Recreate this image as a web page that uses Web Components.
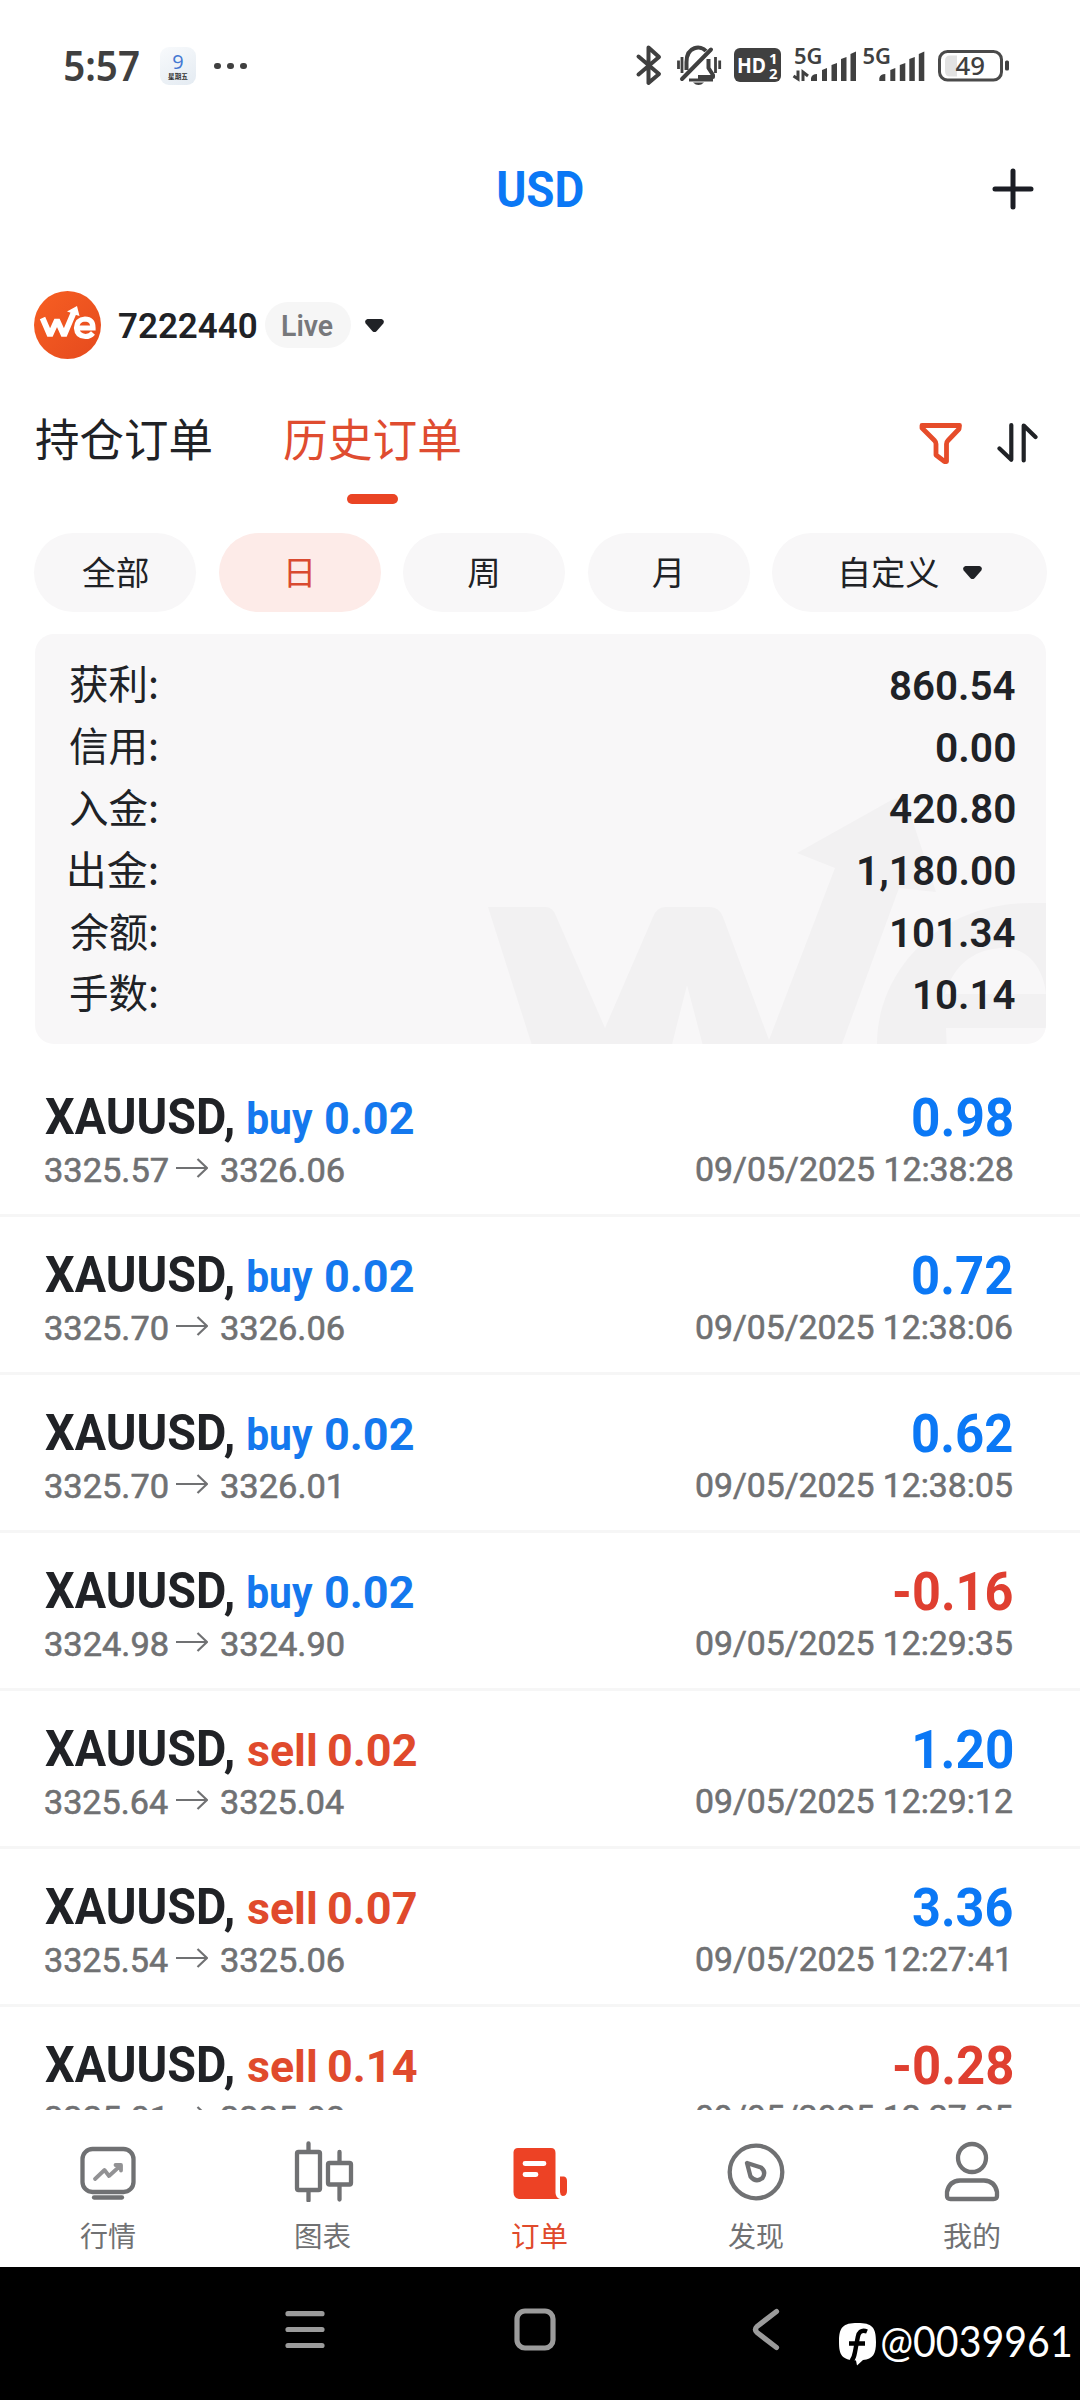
<!DOCTYPE html>
<html lang="zh-CN">
<head>
<meta charset="utf-8">
<title>USD</title>
<style>
html,body{margin:0;padding:0;background:#fff}
body{width:1080px;height:2400px;overflow:hidden;font-family:Roboto,"Noto Sans CJK SC",sans-serif;color:#202226}
</style>
</head>
<body>
<orders-app></orders-app>
<script>
const define=(name,html,setup)=>customElements.define(name,class extends HTMLElement{
  connectedCallback(){
    if(this.shadowRoot)return;
    const root=this.attachShadow({mode:'open'});
    root.innerHTML=typeof html==='function'?html(this):html;
    if(setup)setup(this,root);
  }
});

define('orders-app',`<style>
:host{display:flex;flex-direction:column;width:1080px;height:2400px;position:relative;overflow:hidden}
orders-list{flex:1;min-height:0}
</style>
<status-bar></status-bar><title-bar></title-bar><account-row></account-row>
<order-tabs></order-tabs><period-chips></period-chips><summary-card></summary-card>
<orders-list></orders-list><tab-bar></tab-bar><system-nav></system-nav>`);

define('status-bar',`<style>
:host{display:flex;height:132px;box-sizing:border-box;padding:0 71px 0 65px;justify-content:space-between;align-items:center;color:#404040}
.l{display:flex;align-items:center}
.time{font:600 42px/50px "Noto Sans";margin-top:-3px}
.cal{margin-left:21px;width:36px;height:38px;border-radius:9px;background:linear-gradient(150deg,#f8fafc,#e4ebf2);display:flex;flex-direction:column;align-items:center}
.cal b{font:500 20px/20px "Open Sans";color:#4478d2;margin-top:5px}
.cal i{font:normal 700 6.6px/8px "Noto Sans CJK SC";color:#333;margin-top:0}
.dots{margin-left:18px;display:flex;gap:6.6px}.dots i{width:6.6px;height:6.6px;border-radius:50%;background:#404040}
svg{display:block}
text{font-family:"Noto Sans","Open Sans",sans-serif}
</style>
<div class="l"><fit-text class="time" w="74">5:57</fit-text>
<div class="cal"><b>9</b><i>星期五</i></div><div class="dots"><i></i><i></i><i></i></div></div>
<svg width="374" height="50" viewBox="635 41 374 50" fill="#404040">
<path d="M638.500 56.500L659 74L648.500 83V47.500L659 57L638.500 74.500" fill="none" stroke="#404040" stroke-width="4" stroke-linejoin="round" stroke-linecap="round"/>
<g fill="none" stroke="#404040" stroke-width="4">
<path d="M686.500 70V62C686.500 46 701 45 706 51"/><path d="M682 79L711 49.500" stroke-linecap="round"/>
<path d="M708.500 59V68L713 75V77H698" stroke-linejoin="round"/><path d="M689 80H713" stroke-width="3"/><path d="M678.500 60.500V69M682 57V73M715.500 57V73M719.700 60.500V69" stroke-width="2.800"/></g>
<path d="M693 82.500H704Q698.500 87.500 693 82.500Z"/>
<rect x="734" y="48" width="47" height="34" rx="6"/>
<g fill="#fff"><text x="737" y="72.500" font-size="21" font-weight="700" textLength="29" lengthAdjust="spacingAndGlyphs">HD</text>
<text x="769" y="63.500" font-size="15" font-weight="700">1</text><text x="769" y="79" font-size="15" font-weight="700">2</text></g>
<text x="794" y="63.500" font-size="21" font-weight="600" textLength="28.500" lengthAdjust="spacingAndGlyphs">5G</text>
<text x="862.500" y="63.500" font-size="21" font-weight="600" textLength="28.500" lengthAdjust="spacingAndGlyphs">5G</text>
<path d="M793.500 76L798 79V70.500M803 81V72L808 76" fill="none" stroke="#404040" stroke-width="3"/>
<g id="bars"><path d="M811 81V78Q812 74 817 74V81Z"/><path d="M822 81V70L827 68V81Z"/><path d="M831.500 81V65L837 63V81Z"/><path d="M841 81V59L846.500 57V81Z"/><path d="M850.500 81V54L856 51.500V81Z"/></g>
<use href="#bars" x="68.300"/>
<rect x="939.500" y="51.500" width="62" height="28.500" rx="8" fill="none" stroke="#4a4a4a" stroke-width="3"/>
<path d="M957 55.500V76.500H950Q945 76.500 945 71V61Q945 55.500 950 55.500Z" fill="#e2e2e2"/>
<rect x="1005" y="60.500" width="4" height="10" rx="1.500"/>
<text x="955.500" y="74.500" font-size="25" font-weight="500" textLength="29.500" lengthAdjust="spacingAndGlyphs">49</text>
</svg>`);

define('title-bar',`<style>
:host{display:grid;grid-template-columns:1fr auto 1fr;align-items:center;height:114px;padding:0 46px 0 47px}
fit-text{grid-column:2;font:700 50px/60px Roboto;color:#0b78f5;margin-top:2px}
svg{justify-self:end}
</style><fit-text w="85">USD</fit-text>
<svg width="42" height="42" viewBox="0 0 42 42"><path d="M21 3V39M3 21H39" stroke="#1b1d24" stroke-width="5" stroke-linecap="round"/></svg>`);

const caret='<svg width="19" height="14" viewBox="0 0 19 14"><path d="M2.500 0H16.500Q20 1 18.300 4.500L11.500 12.200Q9.500 14 7.500 12.200L.7 4.500Q-1 1 2.500 0Z" fill="#202226"/></svg>';

define('account-row',`<style>
:host{display:flex;align-items:center;height:158px;padding-left:34px}
.id{font:600 34.500px/40px Roboto;margin:2px 0 0 18px}
.live{display:flex;align-items:center;justify-content:center;width:86px;height:46px;border-radius:23px;background:#f6f6f6;margin-left:8px;color:#77787b;font:600 30px/40px Roboto}
.live fit-text{margin-top:2px}
svg{display:block}.c{margin:2px 0 0 14px}
</style>
<svg width="67" height="68" viewBox="0 0 67 68"><defs><linearGradient id="g" x1="0" y1="0" x2="1" y2="1"><stop offset="0" stop-color="#f75f22"/><stop offset="1" stop-color="#e54a1e"/></linearGradient></defs>
<ellipse cx="33.500" cy="34" rx="33.500" ry="34" fill="url(#g)"/>
<path d="M8.500 27L16 44.500L23 29L30 44.500L39.500 22" fill="none" stroke="#fff" stroke-width="5.800" stroke-linejoin="bevel"/>
<path d="M33 20.500L43 15L45.500 25L40.500 23.500L36 26.500L37.500 22Z" fill="#fff"/>
<path d="M43.500 37H59Q59 28 51 28Q43 28.500 42.500 37Q43 45 51.500 45.500Q56 45.500 59 42" fill="none" stroke="#fff" stroke-width="5.200"/></svg>
<fit-text class="id" w="138">7222440</fit-text><span class="live"><fit-text w="50">Live</fit-text></span><span class="c">${caret}</span>`);

define('order-tabs',`<style>
:host{display:flex;height:129px;box-sizing:border-box;padding:4px 42px 0 36px}
div{display:flex;flex-direction:column;align-items:center;margin-right:73px}
fit-text{font:400 45px/60px "Noto Sans CJK SC"}
.on{color:#df4c30}.on i{margin-top:26px;width:51px;height:10px;border-radius:5px;background:#ea4424}
svg{display:block;margin-top:14px}.f{margin-left:auto;margin-right:34px}
</style>
<div><fit-text w="175">持仓订单</fit-text></div><div class="on"><fit-text w="176">历史订单</fit-text><i></i></div>
<svg class="f" width="44" height="44" viewBox="919 422 44 44"><path d="M922 425.500H959.500L959 429L948 440.500Q946.500 442 946.500 444V461.500H944.500L936 455V444Q936 442 934.500 440.500L922 428Z" fill="none" stroke="#e64c2a" stroke-width="4.800" stroke-linejoin="round"/></svg>
<svg width="41" height="44" viewBox="996.500 422 41 44"><path d="M1010.800 425V459.800L999 448.500M1023.200 460.500V425.500L1035 437" fill="none" stroke="#202226" stroke-width="4.200" stroke-linecap="round" stroke-linejoin="round"/></svg>`);

define('period-chips',`<style>
:host{display:flex;gap:22.500px;height:79px;padding:0 33.500px 0 34px}
span{display:flex;align-items:center;justify-content:center;width:162px;border-radius:40px;background:#f8f7f8;font:400 33.500px/44px "Noto Sans CJK SC";padding-bottom:4px;box-sizing:border-box}
.on{background:#fdebe8;color:#d94a30}.last{flex:1;padding-left:5px}.last svg{margin-left:24px;margin-top:5px}
</style>
<span><fit-text w="66">全部</fit-text></span><span class="on">日</span><span>周</span><span>月</span>
<span class="last"><fit-text w="97">自定义</fit-text>${caret}</span>`);

define('summary-card',`<style>
:host{display:grid;position:relative;overflow:hidden;margin:22px 34px 0 35px;height:410px;box-sizing:border-box;padding:20px 31px 19px 35px;border-radius:19px;background:#f8f7f8;grid-auto-rows:61.8px}
.bg{position:absolute;left:0;top:0}
div{display:flex;justify-content:space-between;align-items:center;position:relative}
.k{font:400 39.500px/50px "Noto Sans CJK SC";margin-top:-5px}
.v{font:600 41px/50px Roboto;margin-top:2px}
</style>
<svg class="bg" width="1011" height="410" viewBox="35 634 1011 410" fill="#f2f1f2">
<path d="M488 907H545Q553 907 556 916L605 1028L653 917Q657 907 665 907H710Q719 907 723 917L769 1040L835 868L797 853L888 802Q904 792 909 810L936 892L899 888L842 1044V1080H712L687 985L663 1080H543Z"/>
<path fill-rule="evenodd" d="M1030 903C935 903 877 975 877 1044V1080H948L946 1028H1060V903ZM945 994C957 955 986 948 1004 948C1029 948 1044 970 1046 994Z"/></svg>
${[['获利','860.54',125],['信用','0.00',78],['入金','420.80',125],['出金','1,180.00',156],['余额','101.34',123],['手数','10.14',100]].map(r=>`<div><fit-text class="k" w="87">${r[0]}:</fit-text><fit-text class="v" w="${r[2]}">${r[1]}</fit-text></div>`).join('')}`);

define('orders-list',()=>{
  const rows=[['buy','0.02','3325.57','3326.06','0.98','12:38:28'],['buy','0.02','3325.70','3326.06','0.72','12:38:06'],['buy','0.02','3325.70','3326.01','0.62','12:38:05'],['buy','0.02','3324.98','3324.90','-0.16','12:29:35'],['sell','0.02','3325.64','3325.04','1.20','12:29:12'],['sell','0.07','3325.54','3325.06','3.36','12:27:41'],['sell','0.14','3325.01','3325.08','-0.28','12:27:25']];
  return `<style>:host{display:block;overflow:hidden;padding-top:15px;box-sizing:border-box}</style>`+rows.map(([side,lot,from,to,pl,time])=>`<order-row side="${side}" lot="${lot}" from="${from}" to="${to}" pl="${pl}" date="09/05/2025 ${time}"></order-row>`).join('');
});

define('order-row',e=>{
  const a=n=>e.getAttribute(n),sell=a('side')==='sell',neg=a('pl')[0]==='-',one=n=>a(n).endsWith('1');
  return `<style>
:host{display:flex;justify-content:space-between;height:158px;box-sizing:border-box;border-bottom:3px solid #f6f6f6;padding:0 68px 0 45px}
.l{padding-top:28px}.r{padding-top:29px;display:flex;flex-direction:column;align-items:flex-end}
.t{display:flex;align-items:baseline;height:60px;line-height:60px}
.s{font:700 50px/60px Roboto;margin-right:15px}
.q{font:700 44.500px/60px Roboto;color:${sell?'#e04a2c':'#1478ee'}}.q+.q{margin-left:12.500px}
.p{display:flex;align-items:center;height:40px;margin-top:3px;color:#707173;font:500 34px/40px Roboto}
.p svg{margin:0 13px 4px 8px}
.v{font:700 53px/60px Roboto;color:${neg?'#df3f30':'#0b78f5'}}
.d{font:500 33.500px/40px Roboto;color:#707173;margin-top:2px}
.p fit-text,.d{font-weight:400;-webkit-text-stroke:.6px #707173}
</style>
<div class="l"><div class="t"><fit-text class="s" w="188">XAUUSD,</fit-text><fit-text class="q" w="${sell?68:65}">${a('side')}</fit-text><fit-text class="q" w="${a('lot')==='0.14'?88:87}">${a('lot')}</fit-text></div>
<div class="p"><fit-text w="${one('from')?118:123}" style="margin-right:${one('from')?5:0}px">${a('from')}</fit-text><svg width="32" height="20" viewBox="0 0 32 20"><path d="M0 10H31M21.500 1L31 10L21.500 19" fill="none" stroke="#707173" stroke-width="2.200"/></svg><fit-text w="${one('to')?118:123}">${a('to')}</fit-text></div></div>
<div class="r"><fit-text class="v" w="${neg?118:a('pl')==='1.20'?97:99}">${a('pl')}</fit-text><fit-text class="d" w="${one('date')?310:316}" style="margin-right:${one('date')?6:0}px">${a('date')}</fit-text></div>`;
});

define('tab-bar',`<style>
:host{display:grid;grid-template-columns:repeat(5,1fr);height:157px;background:#fff;color:#707173}
div{display:flex;flex-direction:column;align-items:center;font:400 28px/40px "Noto Sans CJK SC"}
fit-text{margin-right:1.500px}
svg{display:block;margin:28px 0 13px}.on{color:#e04a2c}
g,.o{fill:none;stroke:#707173;stroke-width:4.300;stroke-linecap:round;stroke-linejoin:round}
</style>
<div><svg width="64" height="64" viewBox="76 2138 64 64"><g><rect x="82.500" y="2149" width="51" height="43" rx="10"/><path d="M94 2197.500H122"/><path stroke="#929294" stroke-width="3.800" d="M95 2179L104.500 2170L109 2176L120 2166M115.500 2165H121V2170.500"/></g></svg><fit-text w="55">行情</fit-text></div>
<div><svg width="64" height="64" viewBox="292 2138 64 64"><g><rect x="297" y="2152" width="23" height="38" rx="1.500"/><path d="M308.500 2143.500V2151M308.500 2191V2200.500M339.500 2152V2162M339.500 2186V2199.500"/><rect x="328" y="2163" width="23" height="21.500" rx="1.500"/></g></svg><fit-text w="55">图表</fit-text></div>
<div class="on"><svg width="64" height="64" viewBox="508 2138 64 64"><path fill="#ed4225" d="M518 2148H551Q555.500 2148 555.500 2153V2193Q556 2198 560 2199H519Q513.500 2198 513.500 2192V2152Q514 2148 518 2148ZM560 2176.500H564Q567 2177 567 2181V2191Q567 2196 562.500 2196Q560 2195 560 2192Z"/><path d="M525 2163.500H544M525 2174.500H536" stroke="#fff" stroke-width="4.800" stroke-linecap="round"/></svg><fit-text w="55">订单</fit-text></div>
<div><svg width="64" height="64" viewBox="724 2138 64 64"><g><ellipse cx="756" cy="2172" rx="26.300" ry="26.300"/><path d="M747 2163L761 2167.500Q766.500 2172 762.500 2178Q756 2183 750.500 2176.500Z"/></g></svg><fit-text w="55">发现</fit-text></div>
<div><svg width="64" height="64" viewBox="940 2138 64 64"><g><circle cx="972" cy="2158" r="14"/><path d="M947 2196V2192Q949 2181 960 2180.500H984Q995 2181 997 2192V2196Q997 2199 993.500 2199H950.500Q947 2199 947 2196Z"/></g></svg><fit-text w="55">我的</fit-text></div>`);

define('system-nav',`<style>
:host{display:flex;height:133px;box-sizing:border-box;background:#000;padding:38px 0 0 283px;gap:186px;position:relative}
svg{display:block}g{fill:none;stroke:#9b9b9b;stroke-width:5.200;stroke-linecap:round;stroke-linejoin:round}
.mark{position:absolute;right:10px;top:54px;display:flex;align-items:flex-start;gap:6px;color:#fff;font:400 43px/48px Lato}
.mark fit-text{margin-top:-4px}
</style>
<svg width="44" height="48" viewBox="283 2305 44 48"><g><path d="M288 2313.700H322M288 2329.500H322M288 2345.500H322"/></g></svg>
<svg width="44" height="48" viewBox="513.500 2305 44 48"><g><rect x="517.500" y="2311" width="36" height="37" rx="8"/></g></svg>
<svg width="44" height="48" viewBox="743 2305 44 48"><g><path d="M776.500 2311.500L757 2326.500Q754 2329.500 757 2332.500L776.500 2347.500"/></g></svg>
<div class="mark"><svg width="37" height="46" viewBox="839 2320 37 46"><path fill="#fff" d="M857.500 2322C872 2322 876 2326 876 2341C876 2353 873 2358 863 2359L857 2364.500L856 2359.500C842 2359 839 2354 839 2341C839 2326 843 2322 857.500 2322Z"/><path d="M867 2330.500C861 2328 858.500 2332 857.800 2336L855 2351Q854 2357 851.500 2360M849 2342.500H865" fill="none" stroke="#000" stroke-width="4.400"/></svg><fit-text w="188">@0039961</fit-text></div>`);

/* Text whose inked width is fixed by the "w" attribute. */
const pen=document.createElement('canvas').getContext('2d');
define('fit-text',`<style>:host{display:inline-block;white-space:nowrap}span{display:inline-block;transform-origin:0 50%}</style><span><slot></slot></span>`,(el,root)=>{
  const cs=getComputedStyle(el),w=+el.getAttribute('w');
  pen.font=`${cs.fontWeight} ${cs.fontSize} ${cs.fontFamily}`;
  const m=pen.measureText(el.textContent),left=-m.actualBoundingBoxLeft,ink=m.actualBoundingBoxRight-left,k=w/ink;
  el.style.width=w+'px';
  root.querySelector('span').style.transform=`translateX(${-left*k}px) scaleX(${k})`;
});
</script>
</body>
</html>
